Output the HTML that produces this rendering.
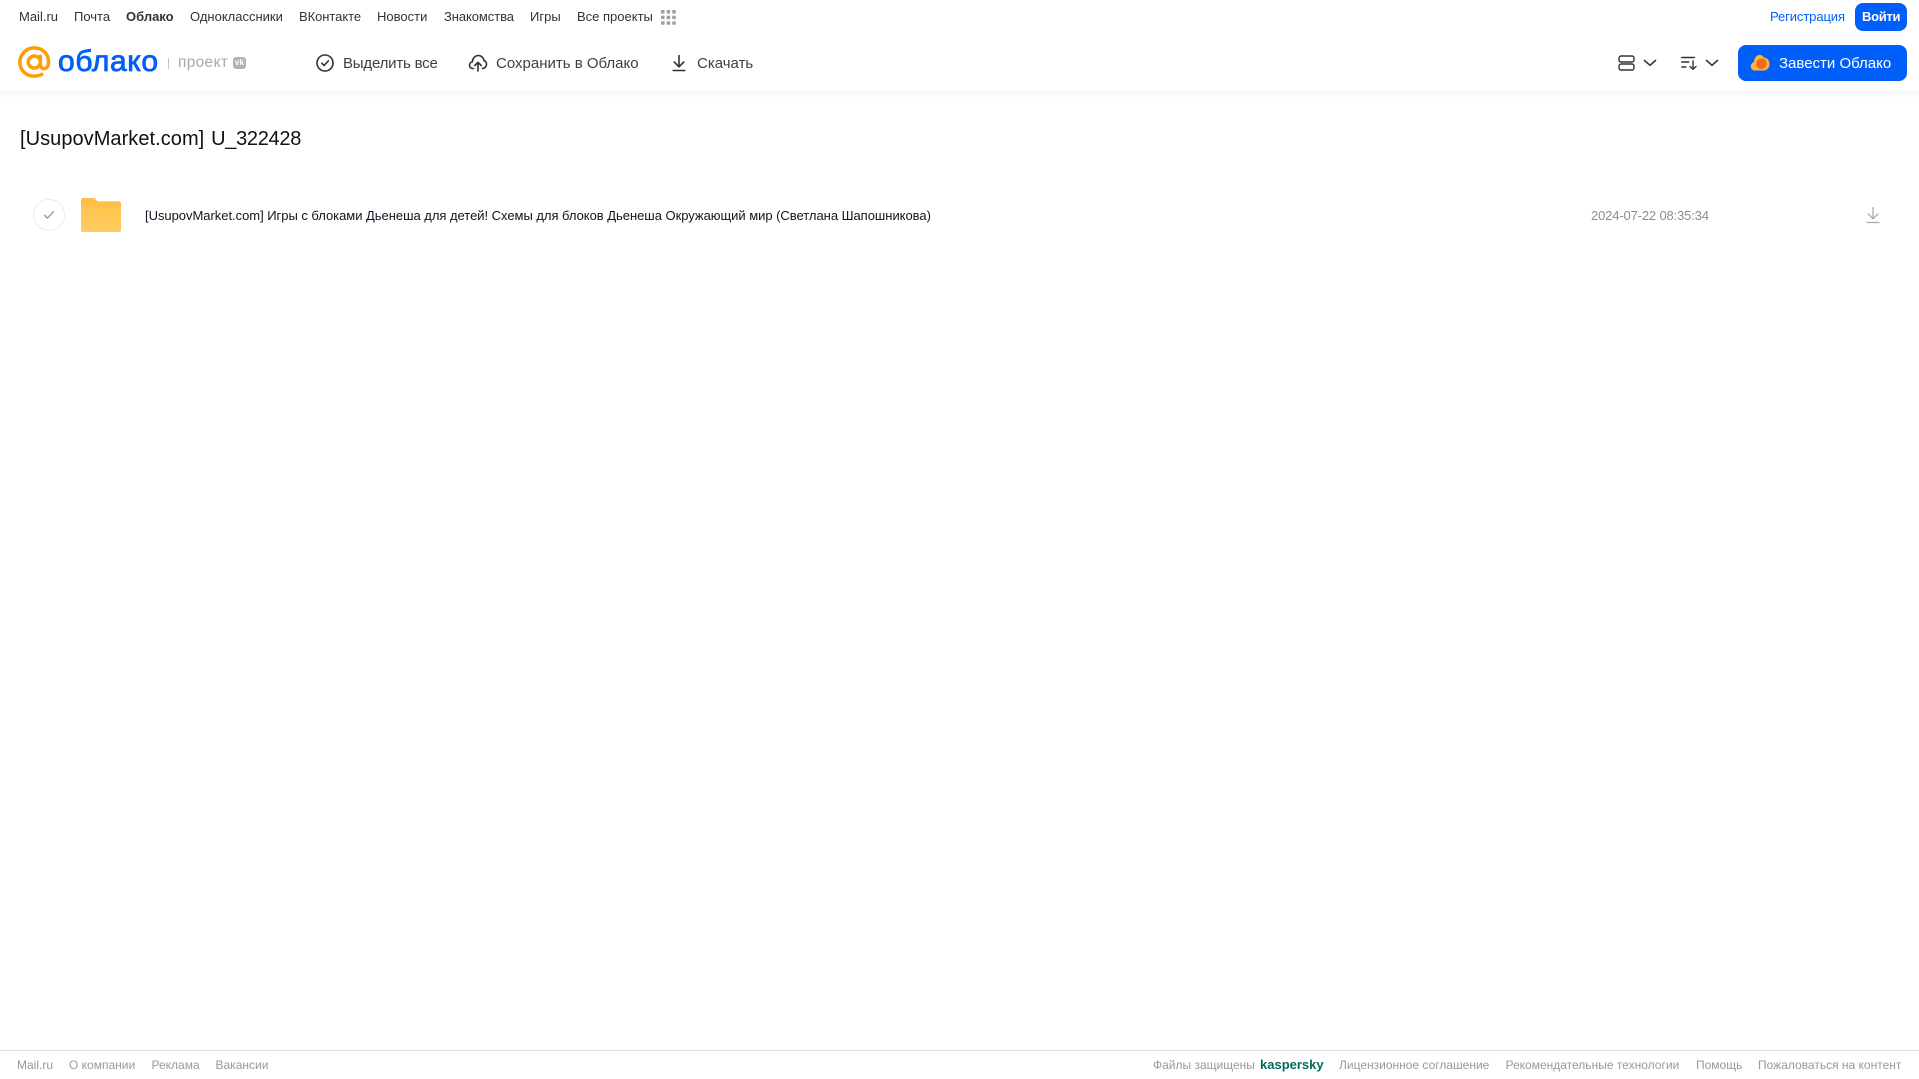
<!DOCTYPE html>
<html lang="ru">
<head>
<meta charset="utf-8">
<title>[UsupovMarket.com] U_322428</title>
<style>
html,body{margin:0;padding:0;background:#fff;width:1919px;height:1079px;overflow:hidden}
body{position:relative;font-family:"Liberation Sans",Arial,sans-serif;color:#333}
a,div.t{position:absolute;white-space:nowrap;text-decoration:none;display:block}
svg{position:absolute;display:block}
.n{top:9px;font-size:13px;line-height:16px;color:#333}
.b{top:54px;font-size:15px;line-height:20px;color:#3f4045}
.f{top:1058px;font-size:12px;line-height:14px;color:#999}
#hd{position:absolute;left:0;top:0;width:1919px;height:91px;background:#fff;box-shadow:0 2px 8px rgba(0,0,0,.06)}
#ft{position:absolute;left:0;top:1050px;width:1919px;height:1px;background:#dcdcdc}
.btn{position:absolute;background:#005ff9;border-radius:8px}
</style>
</head>
<body>
<div id="hd"></div>

<a class="n" style="left:19px">Mail.ru</a>
<a class="n" style="left:74px">Почта</a>
<a class="n" style="left:126px;font-weight:bold">Облако</a>
<a class="n" style="left:190px">Одноклассники</a>
<a class="n" style="left:299px;letter-spacing:-.06px">ВКонтакте</a>
<a class="n" style="left:377px">Новости</a>
<a class="n" style="left:444px;letter-spacing:-.08px">Знакомства</a>
<a class="n" style="left:530px">Игры</a>
<a class="n" style="left:577px">Все проекты</a>
<svg style="left:661px;top:10px" width="15" height="15" viewBox="0 0 15 15" fill="#a0a0a0">
<rect x="0" y="0" width="3.6" height="3.6" rx=".8"/><rect x="5.6" y="0" width="3.6" height="3.6" rx=".8"/><rect x="11.2" y="0" width="3.6" height="3.6" rx=".8"/>
<rect x="0" y="5.6" width="3.6" height="3.6" rx=".8"/><rect x="5.6" y="5.6" width="3.6" height="3.6" rx=".8"/><rect x="11.2" y="5.6" width="3.6" height="3.6" rx=".8"/>
<rect x="0" y="11.2" width="3.6" height="3.6" rx=".8"/><rect x="5.6" y="11.2" width="3.6" height="3.6" rx=".8"/><rect x="11.2" y="11.2" width="3.6" height="3.6" rx=".8"/>
</svg>

<a class="n" style="left:1770px;color:#005ff9;letter-spacing:-.1px">Регистрация</a>
<div class="btn" style="left:1855px;top:3px;width:52px;height:28px"></div>
<a class="n" style="left:1862px;color:#fff;font-weight:bold;top:9px;letter-spacing:-.3px">Войти</a>

<!-- logo -->
<svg style="left:18px;top:46px" width="33" height="33" viewBox="0 0 35 35" fill="none" stroke="#ff9e00" stroke-width="3.7" stroke-linecap="round">
<circle cx="17.3" cy="17" r="6.4"/>
<path d="M23.7 10.8v8.6c0 3.2 2 4.600 4 4.600 2.400 0 4.700-2 4.700-7 0-8.600-6.600-15-15-15C8.600 2 2 8.800 2 17.200 2 25.800 8.800 32 17.200 32c3.400 0 5.800-.7 8-2"/>
</svg>
<div class="t" style="left:58px;top:44px;font-size:30px;line-height:36px;color:#005ff9;-webkit-text-stroke:.8px #005ff9;letter-spacing:.65px">облако</div>
<div style="position:absolute;left:167.500px;top:58px;width:1px;height:11px;background:#c4c4c4"></div>
<div class="t" style="left:178px;top:53px;font-size:15.500px;line-height:20px;color:#a9a9a9;letter-spacing:.3px">проект</div>
<div style="position:absolute;left:233px;top:57px;width:13px;height:12px;background:#b3b3b3;border-radius:3px;color:#fff;font:bold 8px/12px 'Liberation Sans',sans-serif;text-align:center">vk</div>

<!-- toolbar -->
<svg style="left:315px;top:53px" width="20" height="20" viewBox="0 0 20 20" fill="none" stroke="#333" stroke-width="1.600" stroke-linecap="round" stroke-linejoin="round">
<circle cx="10" cy="10" r="8"/><path d="M6.800 10.200l2.300 2.300 4.200-4.600"/>
</svg>
<a class="b" style="left:343px;letter-spacing:-.2px">Выделить все</a>

<svg style="left:468px;top:54px" width="20" height="18" viewBox="0 0 20 18" fill="none" stroke="#333" stroke-width="1.600" stroke-linecap="round" stroke-linejoin="round">
<path d="M5.500 14.500H4.800C2.900 14.500 1.500 13 1.500 11.200c0-1.600 1.100-3 2.700-3.200C4.600 4.200 7.200 1.500 10.300 1.500c3 0 5.400 2.300 5.800 5.300 1.500.4 2.400 1.800 2.400 3.400 0 2.300-1.700 4.300-4 4.300"/>
<path d="M10 17V8.500M6.800 11.500L10 8.300l3.200 3.200"/>
</svg>
<a class="b" style="left:496px">Сохранить в Облако</a>

<svg style="left:672px;top:54px" width="14" height="18" viewBox="0 0 14 18" fill="none" stroke="#333" stroke-width="1.600" stroke-linecap="round" stroke-linejoin="round">
<path d="M7 1.500v11M2.200 8L7 12.800 11.800 8M1.200 16.500h11.600"/>
</svg>
<a class="b" style="left:697px">Скачать</a>

<svg style="left:1618px;top:55px" width="17" height="16" viewBox="0 0 17 16" fill="none" stroke="#333" stroke-width="1.400">
<rect x="1" y="1" width="15" height="6" rx="2"/><rect x="1" y="9" width="15" height="6" rx="2"/>
</svg>
<svg style="left:1643px;top:59px" width="14" height="8" viewBox="0 0 14 8" fill="none" stroke="#333" stroke-width="1.600" stroke-linecap="round" stroke-linejoin="round"><path d="M1.500 1.500L7 6.300l5.500-4.800"/></svg>
<svg style="left:1681px;top:56px" width="16" height="14" viewBox="0 0 16 14" fill="none" stroke="#333" stroke-width="1.400" stroke-linecap="round" stroke-linejoin="round">
<path d="M.8 1.500h12.500M.8 6h7M.8 11h4M12 5v8M9 10.500l3 2.800 3-2.800"/>
</svg>
<svg style="left:1705px;top:59px" width="14" height="8" viewBox="0 0 14 8" fill="none" stroke="#333" stroke-width="1.600" stroke-linecap="round" stroke-linejoin="round"><path d="M1.500 1.500L7 6.300l5.500-4.800"/></svg>

<div class="btn" style="left:1738px;top:45px;width:169px;height:36px"></div>
<svg style="left:1750px;top:54px" width="20" height="17" viewBox="0 0 20 17">
<path d="M5 16.500C2.200 16.500.8 14.500.8 12.300c0-2 1.300-3.600 3-4C4.300 4 6.500 1 9.500 1c2 0 3.500 1 4.500 2.600 3.300.2 5.500 3 5.500 6.400 0 3.800-2.500 6.500-6 6.500z" fill="#ffb43a"/>
<circle cx="11.500" cy="9.800" r="5.300" fill="#f2681f"/>
</svg>
<a class="b" style="left:1779px;color:#fff">Завести Облако</a>

<!-- title -->
<div class="t" style="left:20px;top:126px;font-size:20px;line-height:26px;color:#111;font-weight:normal;letter-spacing:.05px;word-spacing:1.2px">[UsupovMarket.com] <span style="letter-spacing:-.3px">U_322428</span></div>

<!-- row -->
<div style="position:absolute;left:33px;top:199px;width:30px;height:30px;border:1px solid #ececec;border-radius:50%"></div>
<svg style="left:43px;top:210px" width="12" height="10" viewBox="0 0 12 10" fill="none" stroke="#9a9a9a" stroke-width="1.400" stroke-linecap="round" stroke-linejoin="round"><path d="M1.500 5.200l2.900 2.900 6-6.300"/></svg>
<svg style="left:81px;top:198px" width="40" height="34" viewBox="0 0 40 34">
<defs><linearGradient id="fg" x1="0" y1="0" x2="0" y2="1"><stop offset="0" stop-color="#ffc34d"/><stop offset="1" stop-color="#ffcc63"/></linearGradient></defs>
<path d="M2 0h9.500c1.600 0 2.600.6 3.400 1.500L16.500 3.400H38c1.100 0 2 .9 2 2V32c0 1.100-.9 2-2 2H2c-1.100 0-2-.9-2-2V2C0 .9.900 0 2 0z" fill="#ffbf47"/>
<path d="M0 8h40v24c0 1.100-.9 2-2 2H2c-1.100 0-2-.9-2-2z" fill="url(#fg)"/>
</svg>
<a style="left:145px;top:208px;font-size:13px;line-height:15px;color:#1a1020;letter-spacing:-.03px">[UsupovMarket.com] Игры с блоками Дьенеша для детей! Схемы для блоков Дьенеша Окружающий мир (Светлана Шапошникова)</a>
<div class="t" style="left:1591px;top:208px;font-size:13px;line-height:15px;color:#8e8e8e;letter-spacing:-.15px">2024-07-22 08:35:34</div>
<svg style="left:1866px;top:206px" width="14" height="18" viewBox="0 0 14 18" fill="none" stroke="#aaa" stroke-width="1.300" stroke-linecap="round" stroke-linejoin="round">
<path d="M7 1.500v11M2.200 8L7 12.800 11.800 8M1 16.500h12"/>
</svg>

<!-- footer -->
<div id="ft"></div>
<a class="f" style="left:17px">Mail.ru</a>
<a class="f" style="left:69px">О компании</a>
<a class="f" style="left:151.500px">Реклама</a>
<a class="f" style="left:215.500px">Вакансии</a>
<a class="f" style="left:1153px">Файлы защищены</a>
<a class="f" style="left:1260px;color:#006d5c;font-weight:bold;font-size:13px">kaspersky</a>
<a class="f" style="left:1339px">Лицензионное соглашение</a>
<a class="f" style="left:1505.500px">Рекомендательные технологии</a>
<a class="f" style="left:1696px">Помощь</a>
<a class="f" style="left:1758px">Пожаловаться на контент</a>
</body>
</html>
